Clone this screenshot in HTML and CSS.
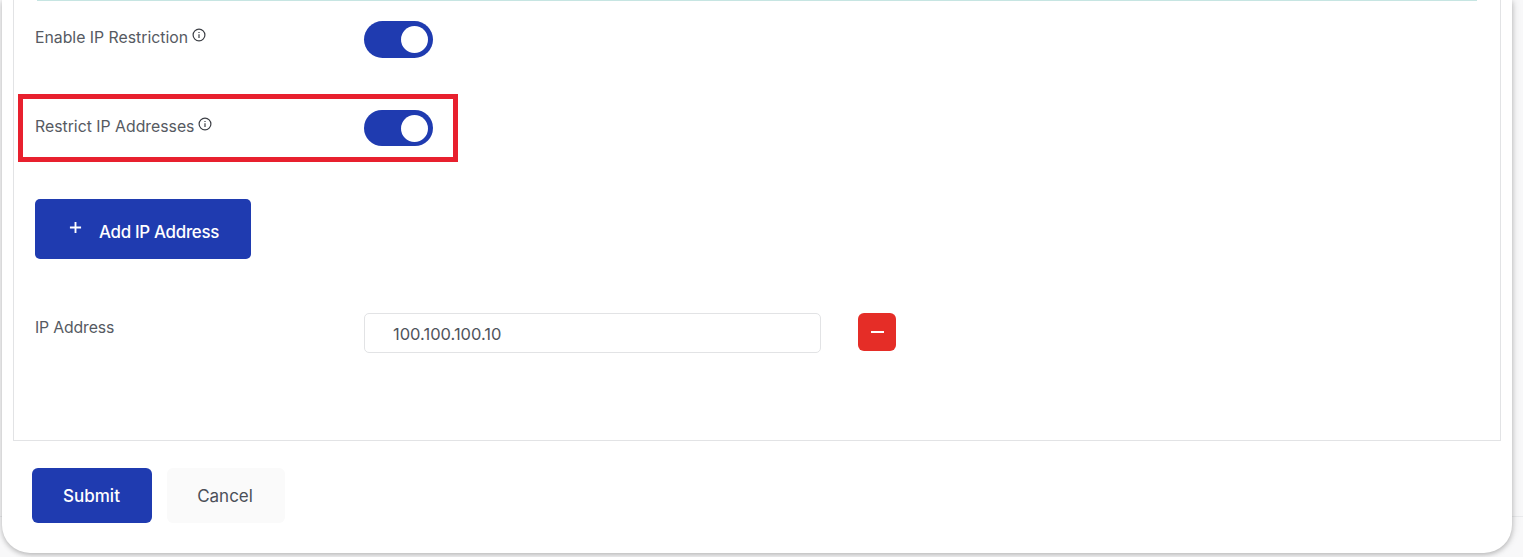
FILE: index.html
```html
<!DOCTYPE html>
<html lang="en">
<head>
  <meta charset="UTF-8">
  <meta name="viewport" content="width=device-width, initial-scale=1.0">
  <title>IP Restriction</title>
  <link rel="stylesheet" href="styles.css">
</head>
<body>
  <div class="card">
    <div class="panel">
      <div class="accent-line"></div>
      <div class="row row-first">
        <div class="label">Enable IP Restriction
          <svg class="info" viewBox="0 0 14 14"><circle cx="7" cy="7" r="5.9"/><path d="M7 6.3v3.6M7 4v1"/></svg>
        </div>
        <div class="toggle"><span class="knob"></span></div>
      </div>
      <div class="row row-second">
        <div class="label">Restrict IP Addresses
          <svg class="info" viewBox="0 0 14 14"><circle cx="7" cy="7" r="5.9"/><path d="M7 6.3v3.6M7 4v1"/></svg>
        </div>
        <div class="toggle"><span class="knob"></span></div>
      </div>
      <div class="highlight"></div>
      <button class="btn-add">
        <svg class="plus" viewBox="0 0 14 14"><path d="M7 1v12M1 7h12"/></svg>
        <span class="btn-add-text">Add IP Address</span>
      </button>
      <div class="row row-ip">
        <div class="label">IP Address</div>
        <input class="ip-input" type="text" value="100.100.100.10">
        <button class="btn-remove"><span class="minus"></span></button>
      </div>
    </div>
    <div class="actions">
      <button class="btn-submit">Submit</button>
      <button class="btn-cancel">Cancel</button>
    </div>
  </div>
</body>
</html>
```

FILE: styles.css
```css
html, body {
  margin: 0;
  height: 557px;
  overflow: hidden;
}
body {
  background: linear-gradient(#e9eaec, #e9eaec) 0 516px / 100% 1px no-repeat #f8f8f9;
  font-family: Inter, "Noto Sans", sans-serif;
  color: #4b4f58;
}
button {
  font-family: inherit;
  border: none;
  cursor: pointer;
}
.card {
  box-sizing: border-box;
  width: 1510px;
  height: 553px;
  margin-left: 2px;
  background: #fff;
  border-radius: 0 0 28px 28px;
  box-shadow: 0 2px 5px rgba(0,0,0,0.2), 1px 0 9px rgba(0,0,0,0.12);
}
.panel {
  position: relative;
  box-sizing: border-box;
  width: 1488px;
  height: 441px;
  margin-left: 11px;
  padding-left: 21px;
  border: 1px solid #e2e3e5;
  border-top: none;
}
.accent-line {
  position: absolute;
  top: 0;
  left: 23px;
  width: 1440px;
  height: 1px;
  background: #c6e5e2;
}
.row {
  display: flex;
  align-items: flex-start;
}
.label {
  width: 329px;
  font-size: 15.8px;
  line-height: 20px;
  color: #565a62;
  flex-shrink: 0;
}
.info {
  width: 14px;
  height: 14px;
  margin-left: -1px;
  vertical-align: 1px;
  fill: none;
  stroke: #3c3f45;
  stroke-width: 1.2;
}
.toggle {
  display: flex;
  align-items: center;
  justify-content: flex-end;
  box-sizing: border-box;
  width: 69px;
  height: 37px;
  padding-right: 5px;
  border-radius: 19px;
  background: #1f3bb0;
}
.knob {
  width: 27px;
  height: 27px;
  border-radius: 50%;
  background: #fff;
}
.row-first {
  padding-top: 21px;
}
.row-first .label {
  padding-top: 7px;
}
.row-second {
  margin-top: 52px;
}
.row-second .label {
  padding-top: 7px;
}
.row-second .toggle {
  height: 36px;
}
.highlight {
  position: absolute;
  top: 94px;
  left: 4px;
  box-sizing: border-box;
  width: 440px;
  height: 68px;
  border: 5px solid #e8202e;
  pointer-events: none;
}
.btn-add {
  display: flex;
  align-items: center;
  box-sizing: border-box;
  width: 216px;
  height: 60px;
  margin-top: 53px;
  padding: 6px 0 0 34px;
  border-radius: 5px;
  background: #1f3bb0;
  color: #fff;
  font-size: 16.9px;
  font-weight: 500;
  letter-spacing: -0.3px;
}
.plus {
  width: 13px;
  height: 13px;
  margin: -10px 17px 0 0;
  fill: none;
  stroke: #fff;
  stroke-width: 2;
}
.row-ip {
  margin-top: 54px;
}
.row-ip .label {
  padding-top: 5px;
  letter-spacing: -0.15px;
}
.ip-input {
  box-sizing: border-box;
  width: 457px;
  height: 40px;
  padding: 2px 0 0 28px;
  border: 1px solid #e2e3e5;
  border-radius: 5px;
  font-family: inherit;
  font-size: 16.5px;
  letter-spacing: 0;
  color: #50545c;
  outline: none;
}
.btn-remove {
  display: flex;
  align-items: center;
  justify-content: center;
  width: 38px;
  height: 38px;
  margin-left: 37px;
  padding: 0;
  border-radius: 6px;
  background: #e52d27;
}
.minus {
  width: 13px;
  height: 2px;
  background: #fff;
}
.actions {
  display: flex;
  gap: 15px;
  padding: 27px 0 0 30px;
}
.btn-submit, .btn-cancel {
  height: 55px;
  border-radius: 6px;
  font-size: 17px;
}
.btn-submit {
  width: 120px;
  padding: 0 1px 0 0;
  background: #1f3bb0;
  color: #fff;
  font-weight: 500;
}
.btn-cancel {
  width: 118px;
  padding: 0 2px 0 0;
  background: #fafafa;
  color: #4b4f58;
}
```
